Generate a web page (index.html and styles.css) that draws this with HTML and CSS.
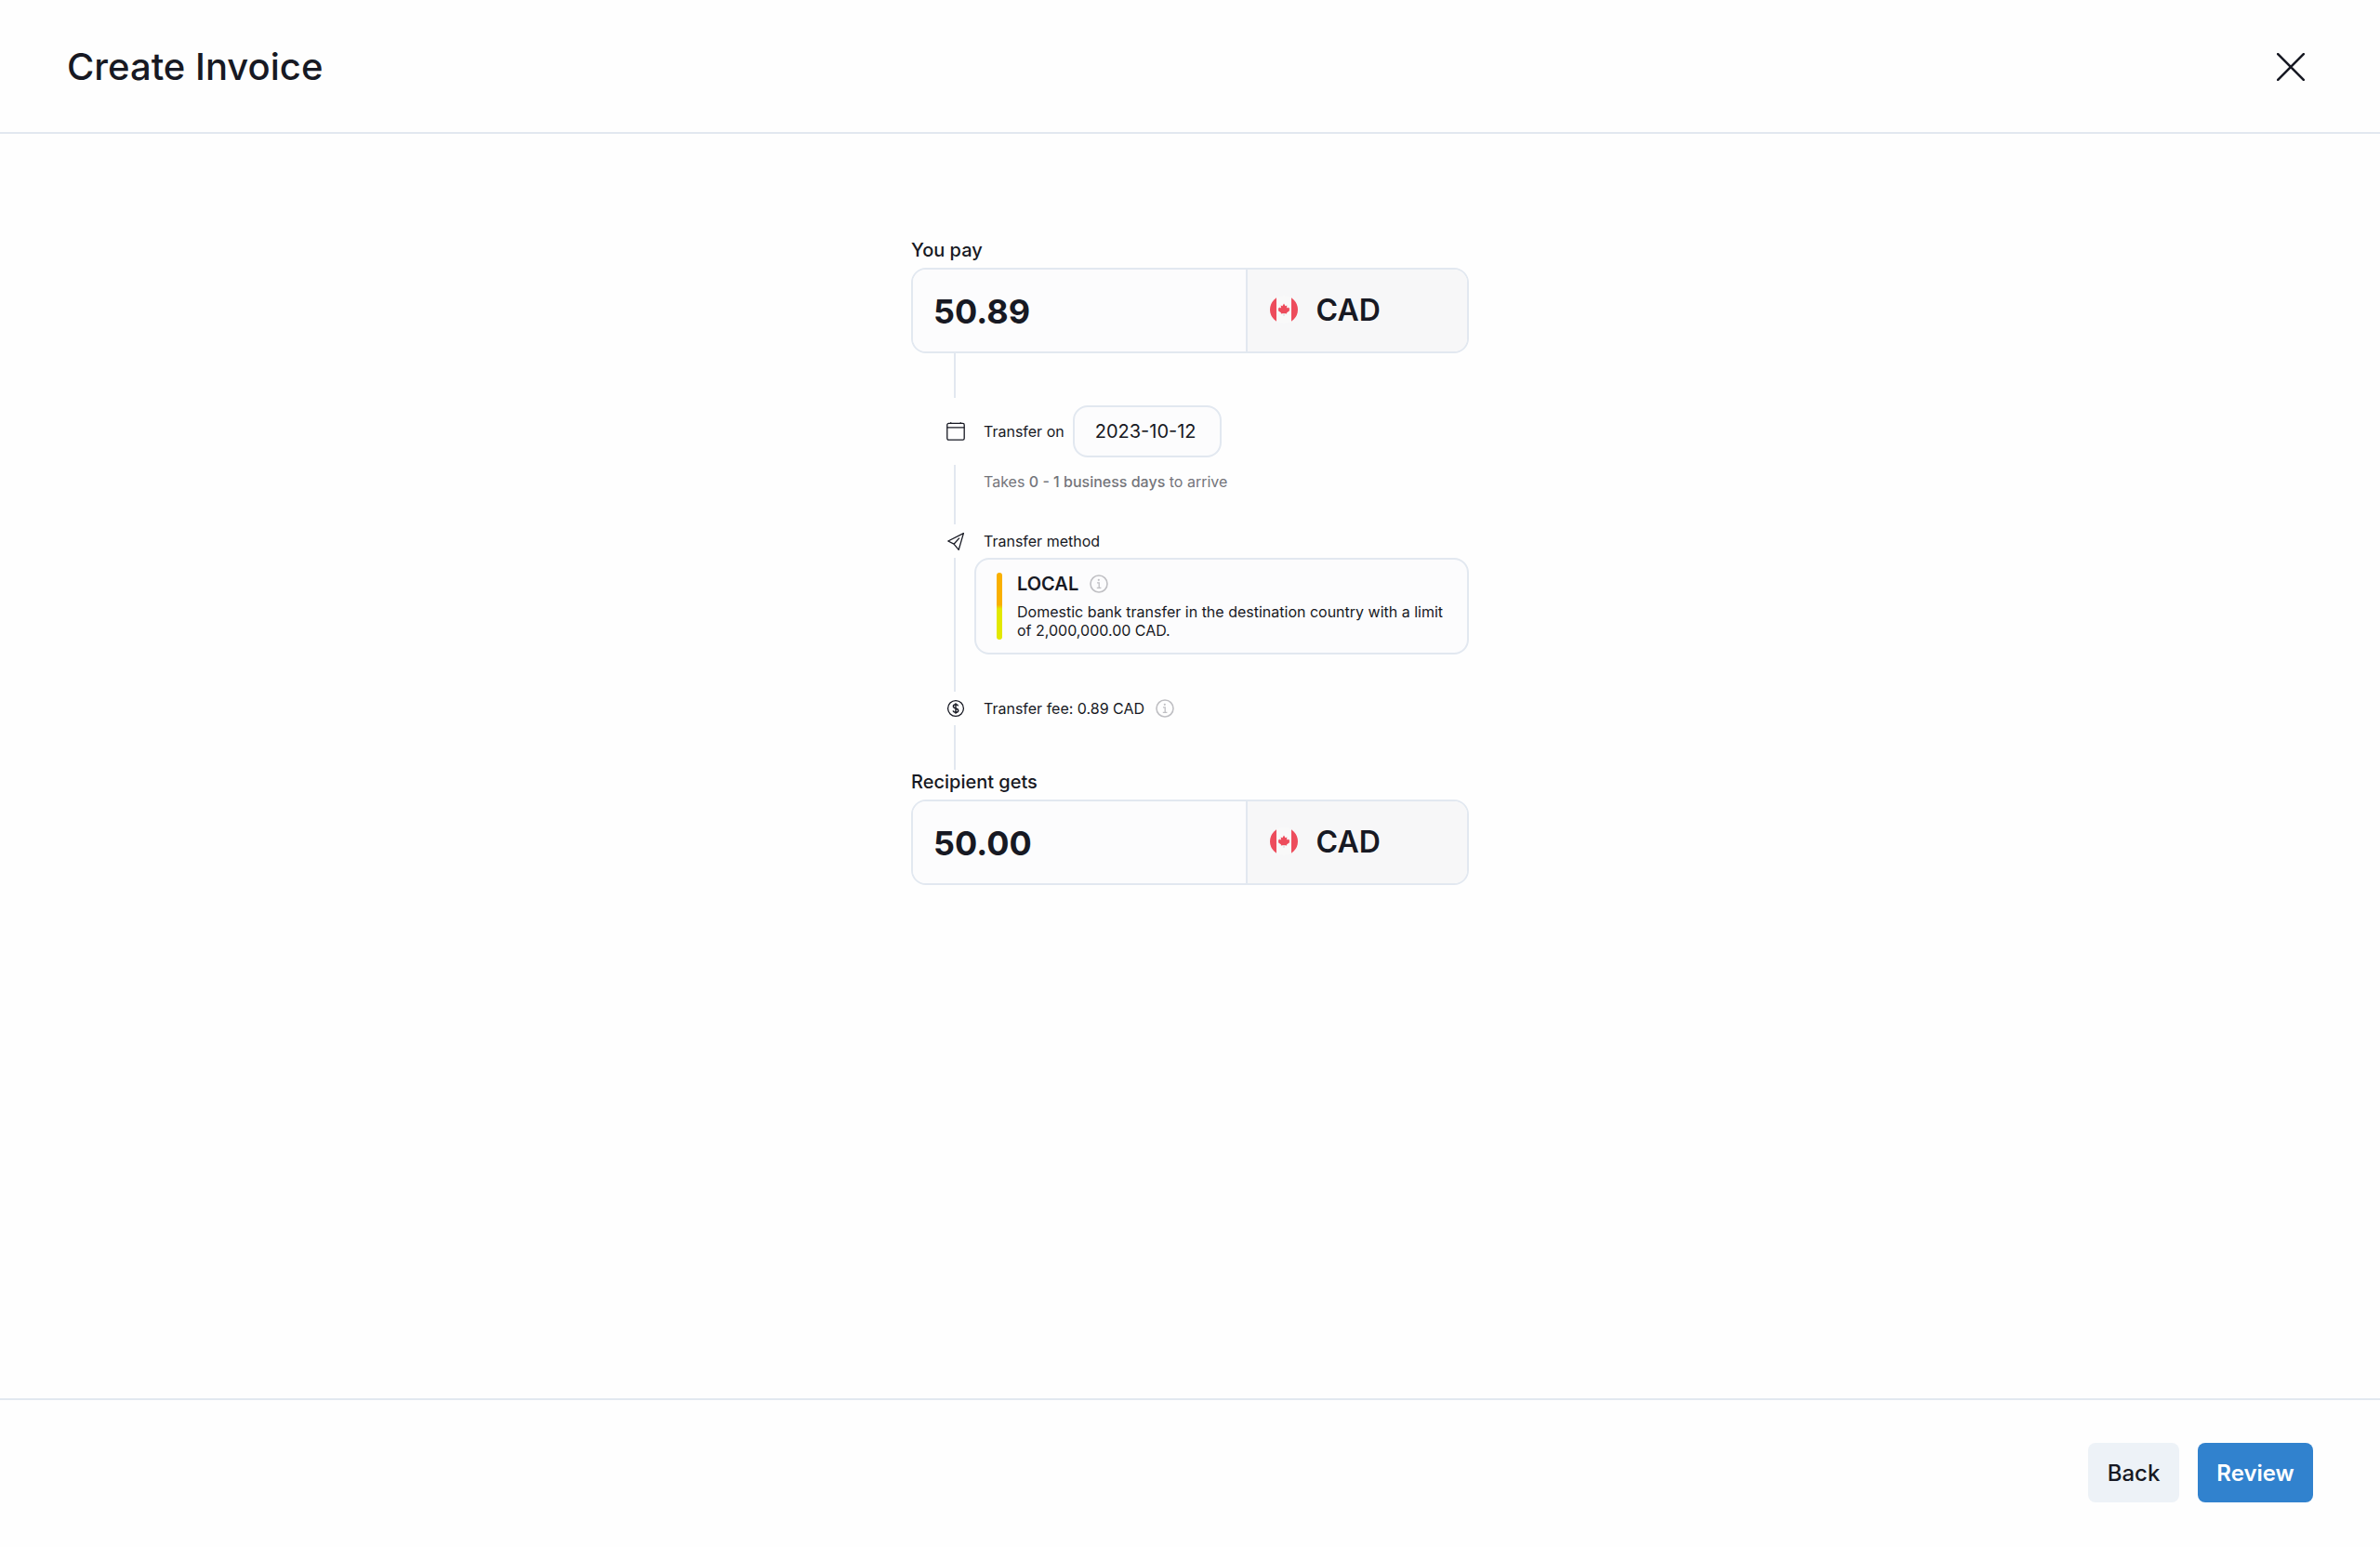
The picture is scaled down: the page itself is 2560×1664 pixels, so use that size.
FILE: index.html
```
<!DOCTYPE html>
<html lang="en">
<head>
    <meta charset="UTF-8">
    <meta name="viewport" content="width=device-width, initial-scale=1.0">
    <title>Create Invoice</title>
    <link rel="stylesheet" href="styles.css">
</head>
<body>
    <!-- Shared icons -->
    <svg class="sprite" aria-hidden="true">
        <symbol id="icon-info" viewBox="0 0 20 20">
            <circle cx="10" cy="10" r="9" fill="none" stroke="currentColor" stroke-width="1.6"/>
            <circle cx="9.8" cy="5.8" r="1.1" fill="currentColor"/>
            <path d="M8 8.8h2.2v5.4M7.8 14.4h4.6" fill="none" stroke="currentColor" stroke-width="1.3"/>
        </symbol>
        <symbol id="flag-ca" viewBox="0 0 30 30">
            <clipPath id="flag-clip"><circle cx="15" cy="15" r="15"/></clipPath>
            <g clip-path="url(#flag-clip)">
                <rect width="30" height="30" fill="#f9f9f9"/>
                <rect width="7" height="30" fill="#ed4c5c"/>
                <rect x="23" width="7" height="30" fill="#ed4c5c"/>
                <path d="M15 17v5" stroke="#d5d5d8" stroke-width="1"/>
                <path d="M15 8.6l1.6 2.7 1.7-.8-.3 3 1.5-1.1.4 1 1.4-.1-.6 1.9.6.7-3.3 2.5.2 1L15 19l-3.2.4.2-1-3.3-2.5.6-.7-.6-1.9 1.4.1.4-1 1.5 1.1-.3-3 1.7.8z" fill="#ed4c5c"/>
            </g>
        </symbol>
    </svg>

    <div class="page">
        <header class="header">
            <h1>Create Invoice</h1>
            <button class="close-btn" type="button" aria-label="Close">
                <svg width="30" height="30" viewBox="0 0 30 30">
                    <path d="M1.2 1.2l27.6 27.6M28.8 1.2L1.2 28.8" fill="none" stroke="currentColor" stroke-width="2.6" stroke-linecap="round"/>
                </svg>
            </button>
        </header>

        <main class="content">
            <form class="transfer" id="transferForm">
                <label class="amount-label" for="payAmount">You pay</label>
                <div class="amount-box">
                    <input class="amount" id="payAmount" type="text" inputmode="decimal" value="50.89">
                    <button class="currency" type="button">
                        <svg class="flag" aria-hidden="true"><use href="#flag-ca"/></svg>
                        CAD
                    </button>
                </div>

                <div class="rail rail-short"></div>

                <div class="step step-date">
                    <svg class="step-icon" viewBox="0 0 24 24" aria-hidden="true">
                        <rect x="2.8" y="3.4" width="18.4" height="17.8" rx="1.6"/>
                        <path d="M2.8 7.8h18.4M6.7 2.2v1.2M17.3 2.2v1.2"/>
                    </svg>
                    <label for="transferDate">Transfer on</label>
                    <input class="date" id="transferDate" type="text" value="2023-10-12">
                </div>

                <div class="rail rail-note">
                    <p class="note">Takes <b>0 - 1 business days</b> to arrive</p>
                </div>

                <div class="step">
                    <svg class="step-icon" viewBox="0 0 24 24" aria-hidden="true">
                        <path d="M20.4 3.6L3.8 12l6.2 3.2 5.2 6.2zM10 15.2l6-6.6"/>
                    </svg>
                    <span>Transfer method</span>
                </div>

                <div class="rail rail-method">
                    <div class="method-card">
                        <div class="method-bar"></div>
                        <div>
                            <div class="method-name">LOCAL <svg class="info" aria-hidden="true"><use href="#icon-info"/></svg></div>
                            <p class="method-text">Domestic bank transfer in the destination country with a limit of 2,000,000.00 CAD.</p>
                        </div>
                    </div>
                </div>

                <div class="step">
                    <svg class="step-icon" viewBox="0 0 24 24" aria-hidden="true">
                        <circle cx="12" cy="12" r="8.4"/>
                        <path d="M14.6 9.4c-.3-1.1-1.3-1.7-2.6-1.7-1.5 0-2.6.8-2.6 2 0 3 5.4 1.6 5.4 4.5 0 1.3-1.2 2.1-2.8 2.1-1.5 0-2.6-.7-2.8-1.9M12 6.2v11.6" stroke-width="1.4"/>
                    </svg>
                    <span class="fee">Transfer fee: 0.89 CAD <svg class="info" aria-hidden="true"><use href="#icon-info"/></svg></span>
                </div>

                <div class="rail rail-short"></div>

                <label class="amount-label" for="getAmount">Recipient gets</label>
                <div class="amount-box">
                    <input class="amount" id="getAmount" type="text" inputmode="decimal" value="50.00">
                    <button class="currency" type="button">
                        <svg class="flag" aria-hidden="true"><use href="#flag-ca"/></svg>
                        CAD
                    </button>
                </div>
            </form>
        </main>

        <footer class="footer">
            <button class="btn btn-secondary" type="button">Back</button>
            <button class="btn btn-primary" type="submit" form="transferForm">Review</button>
        </footer>
    </div>
</body>
</html>
```
FILE: styles.css
```
* {
    margin: 0;
    padding: 0;
    box-sizing: border-box;
}

body {
    font-family: Inter, 'Liberation Sans', sans-serif;
    font-size: 16px;
    line-height: 20px;
    color: #171923;
    background: #fefefe;
}

button,
input {
    font-family: inherit;
    color: inherit;
}

button {
    border: none;
    cursor: pointer;
}

.sprite {
    position: absolute;
    width: 0;
    height: 0;
}

.page {
    min-height: 100vh;
    display: flex;
    flex-direction: column;
}

.header {
    display: flex;
    justify-content: space-between;
    align-items: center;
    height: 144px;
    padding: 2px 72px 0;
    border-bottom: 2px solid #e2e8f0;
}

.header h1 {
    font-size: 40px;
    line-height: 48px;
    font-weight: 500;
}

.close-btn {
    display: flex;
    padding: 9px;
    background: none;
}

.content {
    flex: 1;
    padding: 112px 24px 48px;
}

.transfer {
    max-width: 600px;
    margin: 0 auto;
}

.amount-label {
    display: block;
    padding-bottom: 6px;
    font-size: 20px;
    line-height: 26px;
    font-weight: 500;
}

.amount-box {
    display: flex;
    height: 92px;
    border: 2px solid #e2e8f0;
    border-radius: 16px;
    overflow: hidden;
}

.amount {
    flex: 1;
    min-width: 0;
    padding: 2px 22px 0;
    border: none;
    background: #fcfcfd;
    font-size: 36px;
    font-weight: 700;
}

.currency {
    display: flex;
    align-items: center;
    gap: 20px;
    width: 40%;
    padding: 0 24px 2px;
    border-left: 2px solid #e2e8f0;
    background: #f7f7f8;
    font-size: 32px;
    font-weight: 600;
}

.flag {
    width: 30px;
    height: 30px;
}

/* Vertical line between the steps */
.rail {
    margin-left: 46px;
    border-left: 2px solid #e2e8f0;
}

.rail-short {
    height: 48px;
}

.rail-note {
    height: 64px;
    padding: 8px 0 0 30px;
}

.rail-method {
    padding: 0 0 40px 20px;
}

.step {
    display: flex;
    align-items: center;
    height: 36px;
    padding-left: 36px;
}

.step-date {
    height: 72px;
}

.step-icon {
    width: 24px;
    height: 24px;
    margin-right: 18px;
    fill: none;
    stroke: currentColor;
    stroke-width: 1.3;
    stroke-linejoin: round;
}

.date {
    width: 160px;
    height: 56px;
    margin-left: 9px;
    padding: 0 22px;
    border: 2px solid #e2e8f0;
    border-radius: 16px;
    background: #fcfcfd;
    font-size: 20px;
}

.note {
    color: #74757b;
}

.note b {
    font-weight: 500;
}

.method-card {
    display: flex;
    gap: 16px;
    padding: 14px 22px;
    border: 2px solid #e2e8f0;
    border-radius: 16px;
    background: #fcfcfd;
}

.method-bar {
    flex: none;
    width: 6px;
    border-radius: 3px;
    background: linear-gradient(#f9b000 48%, #e2e800 54%);
}

.method-name {
    display: flex;
    align-items: center;
    gap: 12px;
    height: 24px;
    margin-bottom: 8px;
    font-size: 20px;
    font-weight: 600;
}

.fee {
    display: flex;
    align-items: center;
    gap: 12px;
}

.info {
    width: 20px;
    height: 20px;
    color: #bfbfc3;
}

.footer {
    display: flex;
    justify-content: flex-end;
    align-items: center;
    gap: 20px;
    height: 160px;
    padding: 0 72px 2px;
    border-top: 2px solid #e2e8f0;
}

.btn {
    min-width: 98px;
    height: 64px;
    padding: 0 20px;
    border-radius: 8px;
    font-size: 24px;
}

.btn-secondary {
    background: #edf2f7;
    font-weight: 500;
}

.btn-primary {
    min-width: 124px;
    background: #3182ce;
    color: white;
    font-weight: 600;
}
```
